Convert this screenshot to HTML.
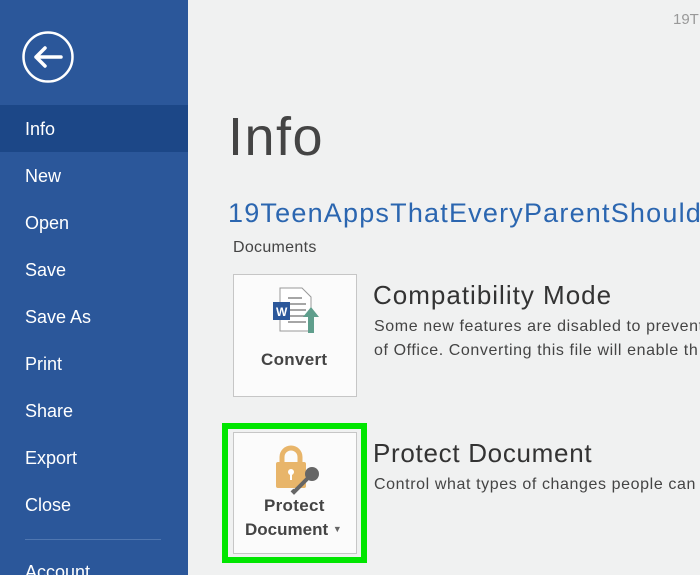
<!DOCTYPE html>
<html><head><meta charset="utf-8"><style>
*{margin:0;padding:0;box-sizing:border-box}
html,body{width:700px;height:575px;overflow:hidden}
body{background:#f0f1f1;font-family:"Liberation Sans","DejaVu Sans",sans-serif;position:relative}
.side{position:absolute;left:0;top:0;width:188px;height:575px;background:#2b579a}
.hl{position:absolute;left:0;top:105px;width:188px;height:47px;background:#1c4787}
.mi{position:absolute;left:25px;color:#fff;font-size:18px;line-height:20px}
.sep{position:absolute;left:25px;top:539px;width:136px;height:1px;background:#4f76b0}
.t{position:absolute;white-space:nowrap}
.box{position:absolute;background:#fbfbfb;border:1px solid #c6c6c6}
</style></head><body>
<div class="side"></div>
<div class="hl"></div>
<svg style="position:absolute;left:22px;top:30px" width="54" height="54" viewBox="0 0 54 54"><circle cx="26" cy="27" r="24.5" fill="none" stroke="#fff" stroke-width="2.5"/><path d="M14 27H39M14 27L23 18M14 27L23 36" fill="none" stroke="#fff" stroke-width="3.5" stroke-linecap="round" stroke-linejoin="round"/></svg>
<div class="mi" style="top:119px">Info</div>
<div class="mi" style="top:166px">New</div>
<div class="mi" style="top:213px">Open</div>
<div class="mi" style="top:260px">Save</div>
<div class="mi" style="top:307px">Save As</div>
<div class="mi" style="top:354px">Print</div>
<div class="mi" style="top:401px">Share</div>
<div class="mi" style="top:448px">Export</div>
<div class="mi" style="top:495px">Close</div>
<div class="sep"></div>
<div class="mi" style="top:562px">Account</div>

<div class="t" style="left:673px;top:11px;font-size:15px;color:#999">19T</div>
<div class="t" style="left:228px;top:106px;font-size:54px;color:#444;letter-spacing:1.5px">Info</div>
<div class="t" style="left:228px;top:198px;font-size:27px;color:#2b66b0;letter-spacing:1.2px">19TeenAppsThatEveryParentShould</div>
<div class="t" style="left:233px;top:239px;font-size:16px;color:#444;letter-spacing:0.3px">Documents</div>

<div class="box" style="left:233px;top:274px;width:124px;height:123px"></div>
<svg style="position:absolute;left:272px;top:287px" width="50" height="48" viewBox="0 0 50 48">
<path d="M8 1H30L39 10V44H8Z" fill="#fff" stroke="#999"/>
<path d="M16 11H30M16 17H34M16 23H34M16 29H34M16 35H34" stroke="#888" stroke-width="1.5"/>
<rect x="1" y="15" width="17" height="18" fill="#2b579a"/>
<text x="4" y="29" font-size="12" font-weight="bold" fill="#fff" font-family="Liberation Sans">W</text>
<path d="M39 20L47 30H42V46H36V30H31Z" fill="#5f9e8c"/>
</svg>
<div class="t" style="left:261px;top:350px;font-size:17px;font-weight:bold;color:#444;letter-spacing:0.3px">Convert</div>

<div class="t" style="left:373px;top:280px;font-size:26px;color:#333;letter-spacing:1px">Compatibility Mode</div>
<div class="t" style="left:374px;top:318px;font-size:16px;color:#444;letter-spacing:0.6px">Some new features are disabled to prevent</div>
<div class="t" style="left:374px;top:342px;font-size:16px;color:#444;letter-spacing:0.6px">of Office. Converting this file will enable th</div>

<div style="position:absolute;left:222px;top:423px;width:145px;height:140px;border:6px solid #00e600"></div>
<div class="box" style="left:233px;top:432px;width:124px;height:122px"></div>
<svg style="position:absolute;left:272px;top:445px" width="50" height="50" viewBox="0 0 50 50">
<path d="M10 18V12A9 9 0 0 1 28 12V18" fill="none" stroke="#e8b56a" stroke-width="5"/>
<rect x="4" y="17" width="30" height="26" rx="2" fill="#e8b56a"/>
<circle cx="19" cy="27" r="3" fill="#fff"/><rect x="18" y="28" width="2" height="7" fill="#fff"/>
<circle cx="40" cy="29" r="7" fill="#666"/>
<path d="M36 33L22 47L20 45" stroke="#666" stroke-width="4" fill="none"/>
</svg>
<div class="t" style="left:264px;top:496px;font-size:17px;font-weight:bold;color:#444;letter-spacing:0.3px">Protect</div>
<div class="t" style="left:245px;top:520px;font-size:17px;font-weight:bold;color:#444">Document <span style="font-size:9px;color:#666;vertical-align:3px">▼</span></div>

<div class="t" style="left:373px;top:438px;font-size:26px;color:#333;letter-spacing:0.7px">Protect Document</div>
<div class="t" style="left:374px;top:476px;font-size:16px;color:#444;letter-spacing:0.6px">Control what types of changes people can</div>
</body></html>
